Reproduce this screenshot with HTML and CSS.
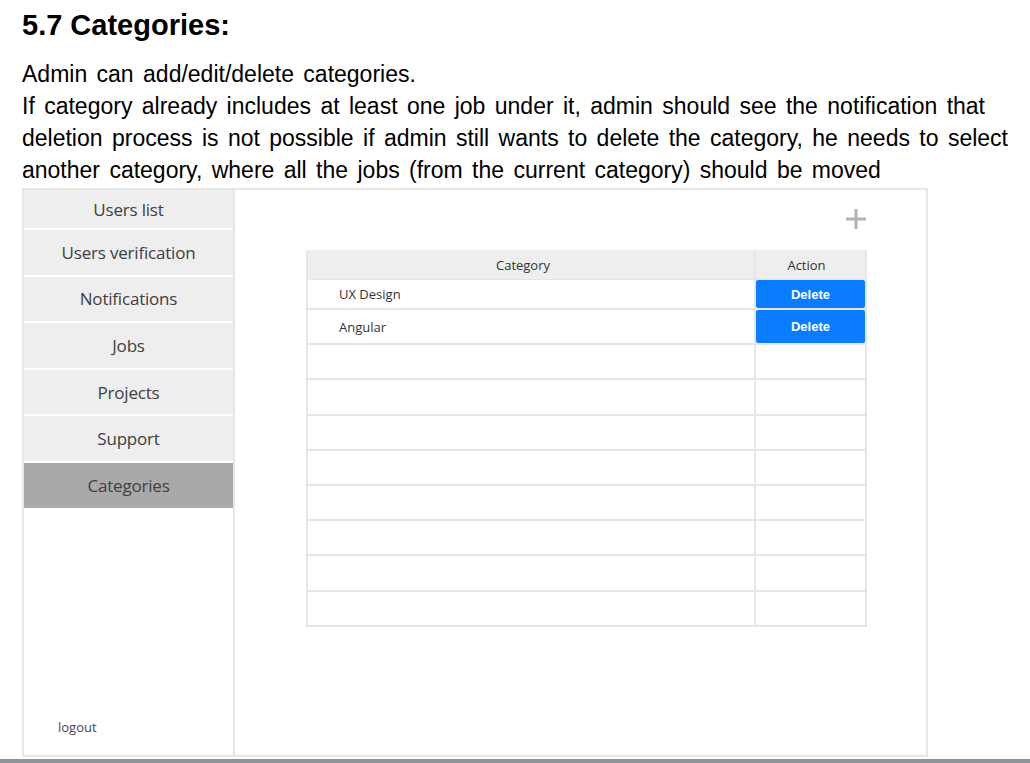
FILE: index.html
```html
<!DOCTYPE html>
<html>
<head>
<meta charset="utf-8">
<link rel="stylesheet" href="styles.css">
</head>
<body>
<div class="page">
  <h1 class="title">5.7 Categories:</h1>
  <p class="desc">Admin can add/edit/delete categories.<br>If category already includes at least one job under it, admin should see the notification that<br>deletion process is not possible if admin still wants to delete the category, he needs to select<br>another category, where all the jobs (from the current category) should be moved</p>
  <div class="mock">
    <aside class="sidebar">
      <div class="nav-item first">Users list</div>
      <div class="nav-item">Users verification</div>
      <div class="nav-item">Notifications</div>
      <div class="nav-item">Jobs</div>
      <div class="nav-item">Projects</div>
      <div class="nav-item">Support</div>
      <div class="nav-item active">Categories</div>
      <div class="spacer"></div>
      <div class="logout">logout</div>
    </aside>
    <main class="content">
      <div class="toolbar">
        <svg class="plus" width="22" height="22" viewBox="0 0 22 22"><path d="M11 1v20M1 11h20" stroke="#b3b3b3" stroke-width="3" fill="none"/></svg>
      </div>
      <div class="table">
        <div class="tr th"><div class="c1">Category</div><div class="c2">Action</div></div>
        <div class="tr row1"><div class="c1 name">UX Design</div><div class="c2"><button class="del">Delete</button></div></div>
        <div class="tr"><div class="c1 name">Angular</div><div class="c2"><button class="del">Delete</button></div></div>
        <div class="tr"><div class="c1"></div><div class="c2"></div></div>
        <div class="tr"><div class="c1"></div><div class="c2"></div></div>
        <div class="tr"><div class="c1"></div><div class="c2"></div></div>
        <div class="tr"><div class="c1"></div><div class="c2"></div></div>
        <div class="tr"><div class="c1"></div><div class="c2"></div></div>
        <div class="tr"><div class="c1"></div><div class="c2"></div></div>
        <div class="tr"><div class="c1"></div><div class="c2"></div></div>
        <div class="tr"><div class="c1"></div><div class="c2"></div></div>
      </div>
    </main>
  </div>
</div>
<div class="bottombar"></div>
</body>
</html>
```
FILE: styles.css
```css
html, body {
  margin: 0;
  padding: 0;
  background: #ffffff;
}
.page {
  padding: 0 22px;
  font-family: "Liberation Sans", Arial, sans-serif;
  color: #000;
}
.title {
  margin: 0;
  padding-top: 8px;
  font-size: 29px;
  line-height: 34px;
  font-weight: bold;
}
.desc {
  margin: 16px 0 0 0;
  font-size: 23px;
  line-height: 32px;
  word-spacing: 3px;
  white-space: nowrap;
}
.mock {
  margin-top: 2px;
  width: 902px;
  height: 565px;
  border: 2px solid #e6e6e6;
  display: flex;
  font-family: "Open Sans", "Noto Sans", sans-serif;
}
.sidebar {
  width: 209px;
  border-right: 2px solid #e6e6e6;
  display: flex;
  flex-direction: column;
}
.nav-item {
  height: 44.6px;
  margin-bottom: 2px;
  background: #eeeeee;
  color: #404040;
  font-size: 17px;
  display: flex;
  align-items: center;
  justify-content: center;
  letter-spacing: -0.2px;
}
.nav-item.first {
  height: 38px;
}
.nav-item.active {
  background: #a9a9a9;
  color: #404040;
}
.spacer {
  flex: 1;
}
.logout {
  padding-left: 34px;
  font-size: 13px;
  color: #4b3f55;
  margin-bottom: 19px;
}
.content {
  flex: 1;
  padding-left: 71px;
}
.toolbar {
  width: 561px;
  height: 60px;
  display: flex;
  justify-content: flex-end;
  align-items: flex-start;
  padding-top: 18px;
  box-sizing: border-box;
}
.plus {
  display: block;
}
.table {
  width: 561px;
  box-sizing: border-box;
  border-left: 2px solid #e6e6e6;
  border-right: 2px solid #e6e6e6;
  font-size: 13px;
  color: #333;
}
.tr {
  display: flex;
  height: 35.2px;
  box-sizing: border-box;
  border-bottom: 2px solid #e6e6e6;
}
.tr.th {
  height: 30px;
  background: #eeeeee;
  border-bottom: 1px solid #e6e6e6;
}
.tr.row1 {
  height: 30px;
}
.c1 {
  width: 446px;
  border-right: 2px solid #e6e6e6;
  display: flex;
  align-items: center;
}
.th .c1 {
  justify-content: center;
  padding-right: 16px;
  width: 430px;
}
.c2 {
  flex: 1;
  display: flex;
  align-items: center;
  justify-content: center;
}
.th .c2 {
  padding-right: 8px;
}
.name {
  padding-left: 31px;
  width: 415px;
}
.del {
  width: 100%;
  height: 100%;
  margin: 0;
  border: none;
  border-radius: 2px;
  background: #0a7cff;
  color: #fff;
  font-family: "Liberation Sans", Arial, sans-serif;
  font-size: 13px;
  font-weight: bold;
  padding: 0;
}
.bottombar {
  margin-top: 2px;
  height: 4px;
  background: #8c959e;
}
```
